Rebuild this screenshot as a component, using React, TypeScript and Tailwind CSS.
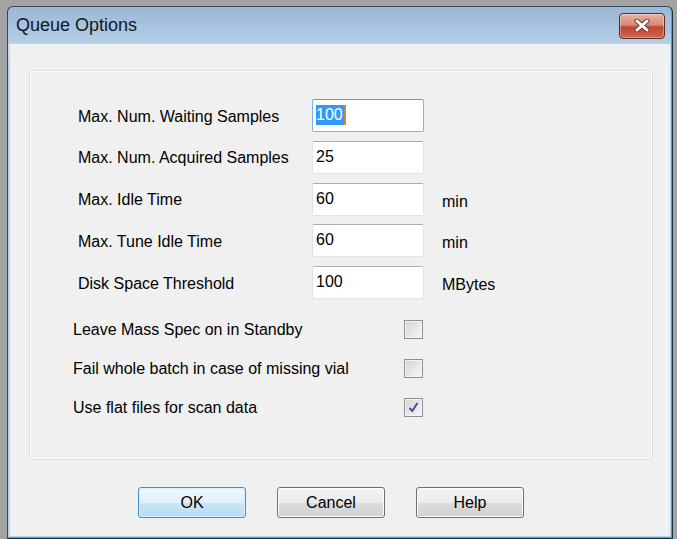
import React from 'react';

const fields = [
  { label: 'Max. Num. Waiting Samples', value: '100', unit: '', focused: true },
  { label: 'Max. Num. Acquired Samples', value: '25', unit: '' },
  { label: 'Max. Idle Time', value: '60', unit: 'min' },
  { label: 'Max. Tune Idle Time', value: '60', unit: 'min' },
  { label: 'Disk Space Threshold', value: '100', unit: 'MBytes' },
];

const checks = [
  { label: 'Leave Mass Spec on in Standby', checked: false },
  { label: 'Fail whole batch in case of missing vial', checked: false },
  { label: 'Use flat files for scan data', checked: true },
];

function CloseButton() {
  return (
    <div className="flex h-[26px] w-[46px] items-center justify-center rounded-[4px] border border-[#5b2a24] bg-[linear-gradient(to_bottom,#eab0a2_0%,#d98a77_45%,#c2452d_55%,#cf6650_100%)] shadow-[inset_0_0_0_1px_rgba(255,255,255,0.35)]">
      <svg width="16" height="13" viewBox="0 0 16 13">
        <path d="M3 2 L13 11 M13 2 L3 11" stroke="#6a3a34" strokeWidth="5" strokeLinecap="round" />
        <path d="M3 2 L13 11 M13 2 L3 11" stroke="#ffffff" strokeWidth="3" strokeLinecap="round" />
      </svg>
    </div>
  );
}

function Field({ label, value, unit, focused }: { label: string; value: string; unit: string; focused?: boolean }) {
  return (
    <div className="flex h-[33px] items-center">
      <div className="w-[239px] pt-[2px] pl-[5px]">{label}</div>
      <div
        className={
          focused
            ? 'h-[33px] w-[112px] rounded-[2px] border border-[#7eb4ea] border-t-[#569de5] bg-white pt-[3px] pl-[3px]'
            : 'h-[33px] w-[112px] rounded-[2px] border border-[#e2e3ea] border-t-[#abadb3] bg-white pt-[3px] pl-[3px]'
        }
      >
        {focused ? (
          <span className="inline-flex h-[20px] items-center bg-[#3399ff] leading-[20px] text-white">
            {value}
            <span className="ml-[1px] h-[20px] w-[2px] bg-[#cc8a2e]" />
          </span>
        ) : (
          <span className="leading-[20px]">{value}</span>
        )}
      </div>
      <div className="pl-[18px] pt-[5px]">{unit}</div>
    </div>
  );
}

function CheckRow({ label, checked }: { label: string; checked: boolean }) {
  return (
    <div className="flex h-[39px] items-center">
      <div className="w-[331px]">{label}</div>
      <div className="flex h-[19px] w-[19px] items-center justify-center border border-[#8f8f8f] bg-[linear-gradient(to_bottom_right,#d4d4d4,#f7f7f7)] shadow-[inset_0_0_0_1px_#f4f4f4]">
        {checked && (
          <svg width="13" height="13" viewBox="0 0 13 13">
            <path d="M2.5 7 L5.3 10 L10.5 2" fill="none" stroke="#3e4f93" strokeWidth="2" />
          </svg>
        )}
      </div>
    </div>
  );
}

function Button({ children, primary }: { children: React.ReactNode; primary?: boolean }) {
  return (
    <div
      className={
        primary
          ? 'flex h-[31px] w-[108px] items-center justify-center rounded-[3px] border border-[#3c8fd0] bg-[linear-gradient(to_bottom,#eef7fd_0%,#e2f1fb_50%,#c9e6f8_51%,#b8ddf4_100%)] shadow-[inset_0_0_0_1px_#d6f0fd]'
          : 'flex h-[31px] w-[108px] items-center justify-center rounded-[3px] border border-[#707070] bg-[linear-gradient(to_bottom,#f3f3f3_0%,#ebebeb_50%,#dddddd_51%,#d0d0d0_100%)] shadow-[inset_0_0_0_1px_#fcfcfc]'
      }
    >
      {children}
    </div>
  );
}

export default function App() {
  return (
    <div className="h-[539px] w-[677px] overflow-hidden bg-[#a3a3a3] pt-[6px] pl-[7px] font-['Liberation_Sans',Arial,sans-serif] text-[16px] text-black">
      <div className="flex h-[533px] w-[666px] flex-col rounded-t-[6px] border border-[#3a4550] border-r-[#16323e] border-b-[#16323e] bg-[linear-gradient(to_bottom,#9ab7d5_0px,#b5cee8_36px,#c4daef_37px,#bcd4eb_60px,#bcd4eb_100%)] shadow-[inset_-1px_-1px_0_#3aaad0]">
        <div className="flex h-[37px] items-center justify-between pr-[7px] pl-[8px]">
          <div className="text-[18px] text-[#101820]">Queue Options</div>
          <CloseButton />
        </div>
        <div className="mr-[2px] mb-[2px] ml-[2px] flex flex-1 flex-col bg-[#f0f0f0] pt-[26px] pl-[19px]">
          <div className="h-[390px] w-[624px] rounded-[3px] border border-[#d9dde0] pt-[28px] pl-[43px] shadow-[inset_0_0_0_1px_#ffffff]">
            <div className="flex flex-col gap-[8.75px]">
              {fields.map((f) => (
                <Field key={f.label} {...f} />
              ))}
            </div>
            <div className="mt-[11px] flex flex-col">
              {checks.map((c) => (
                <CheckRow key={c.label} {...c} />
              ))}
            </div>
          </div>
          <div className="mt-[27px] flex gap-[31px] pl-[109px]">
            <Button primary>OK</Button>
            <Button>Cancel</Button>
            <Button>Help</Button>
          </div>
        </div>
      </div>
    </div>
  );
}
